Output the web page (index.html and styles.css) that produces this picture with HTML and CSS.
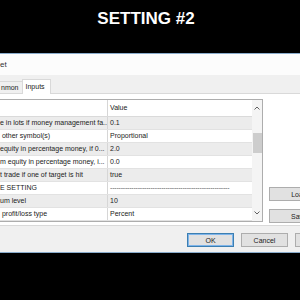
FILE: index.html
```html
<!DOCTYPE html>
<html lang="en">
  <head>
    <meta charset="UTF-8" />
    <title>Setting #2</title>
    <link rel="stylesheet" href="styles.css">
  </head>
  <body>
    <div class="banner"><h1>SETTING #2</h1></div>

    <div class="window">
      <div class="titlebar">et</div>
      <div class="client">
        <div class="tabs">
          <span class="tab">nmon</span>
          <span class="tab active">Inputs</span>
        </div>

        <div class="panel">
          <div class="grid">
            <div class="table">
              <div class="row head"><div class="name"></div><div class="value">Value</div></div>
              <div class="row alt"><div class="name">e in lots if money management fa...</div><div class="value">0.1</div></div>
              <div class="row"><div class="name">&nbsp;other symbol(s)</div><div class="value">Proportional</div></div>
              <div class="row alt"><div class="name">equity in percentage money, if 0...</div><div class="value">2.0</div></div>
              <div class="row"><div class="name">m equity in percentage money, i...</div><div class="value">0.0</div></div>
              <div class="row alt"><div class="name">t trade if one of target is hit</div><div class="value">true</div></div>
              <div class="row"><div class="name">E SETTING</div><div class="value dashes">--------------------------------------------------------</div></div>
              <div class="row alt"><div class="name">um level</div><div class="value">10</div></div>
              <div class="row"><div class="name">&nbsp;profit/loss type</div><div class="value">Percent</div></div>
            </div>
            <div class="scrollbar">
              <div class="arrow">
                <svg width="6" height="4" viewBox="0 0 6 4"><path d="M0.5 3.5 L3 1 L5.5 3.5" fill="none" stroke="#606060" stroke-width="1"/></svg>
              </div>
              <div class="thumb"></div>
              <div class="track"></div>
              <div class="arrow">
                <svg width="6" height="4" viewBox="0 0 6 4"><path d="M0.5 0.5 L3 3 L5.5 0.5" fill="none" stroke="#606060" stroke-width="1"/></svg>
              </div>
            </div>
          </div>
          <div class="side">
            <button>Load</button>
            <button>Save</button>
          </div>
        </div>

        <div class="footer">
          <button class="ok">OK</button>
          <button>Cancel</button>
          <button>Reset</button>
        </div>
      </div>
    </div>
  </body>
</html>
```

FILE: styles.css
```css
html,
body {
  margin: 0;
  width: 300px;
  height: 300px;
  overflow: hidden;
  background: #000;
  font-family: "Liberation Sans", Arial, sans-serif;
}
.banner {
  height: 53px;
  padding: 9px 8px 0 0;
  box-sizing: border-box;
  text-align: center;
}
.banner h1 {
  margin: 0;
  font-size: 17px;
  line-height: 20px;
  font-weight: bold;
  color: #fff;
}
.window {
  width: 352px;
  border-top: 1px solid #8aaccc;
  border-bottom: 1px solid #8aaccc;
  background: #f0f0f0;
  font-size: 7px;
  color: #222;
}
.titlebar {
  height: 21px;
  line-height: 21px;
  background: #fcfcfc;
  font-size: 8px;
  color: #333;
}
.tabs {
  height: 18px;
  display: flex;
  align-items: flex-end;
}
.tab {
  height: 12px;
  line-height: 12px;
  padding: 0 3px 0 1px;
  border: 1px solid #d9d9d9;
  border-bottom: none;
  border-left: none;
  box-sizing: border-box;
  background: #f0f0f0;
}
.tab.active {
  height: 15px;
  line-height: 13px;
  padding: 0 5px 0 3px;
  margin-bottom: -1px;
  border-left: 1px solid #d9d9d9;
  margin-left: -1px;
  background: #fff;
  position: relative;
  z-index: 1;
}
.panel {
  display: flex;
  height: 133px;
  box-sizing: border-box;
  padding: 5px 0 2px;
  border-top: 1px solid #d9d9d9;
  border-bottom: 1px solid #d9d9d9;
  background: #fff;
}
.grid {
  display: flex;
  width: 263px;
  height: 123px;
  border: 1px solid #adadad;
  border-left: none;
  box-sizing: border-box;
}
.table {
  flex: 1;
}
.row {
  display: flex;
  height: 13px;
  line-height: 12px;
  border-bottom: 1px solid #e2e2e2;
  box-sizing: border-box;
  white-space: nowrap;
}
.row.head {
  height: 17px;
  line-height: 16px;
  border-bottom-color: #dadada;
}
.row.alt {
  background: #ececec;
}
.name {
  width: 107px;
  overflow: hidden;
}
.value {
  flex: 1;
  padding-left: 2px;
  border-left: 1px solid #d6d6d6;
  overflow: hidden;
}
.dashes {
  color: #555;
  letter-spacing: -0.2px;
}
.scrollbar {
  width: 10px;
  display: flex;
  flex-direction: column;
  background: #f4f4f4;
}
.arrow {
  height: 16px;
  display: flex;
  align-items: center;
  justify-content: center;
}
.thumb {
  height: 20px;
  margin: 17px 0 0 1px;
  background: #cdcdcd;
}
.track {
  flex: 1;
}
.side {
  display: flex;
  flex-direction: column;
  justify-content: flex-end;
  gap: 8px;
  margin-left: 6px;
}
button {
  font-family: "Liberation Sans", Arial, sans-serif;
  font-size: 7px;
  color: #222;
  background: #e1e1e1;
  border: 1px solid #adadad;
  padding: 0;
  border-radius: 0;
}
.side button {
  width: 60px;
  height: 14px;
}
.footer {
  height: 26px;
  display: flex;
  justify-content: flex-end;
  align-items: flex-start;
  gap: 7px;
  padding: 7px 10px 0 0;
  box-sizing: border-box;
}
.footer button {
  width: 47px;
  height: 14px;
}
.footer .ok {
  border-color: #3c7fb1;
  box-shadow: inset 0 0 0 1px #7eb4ea;
}
```
